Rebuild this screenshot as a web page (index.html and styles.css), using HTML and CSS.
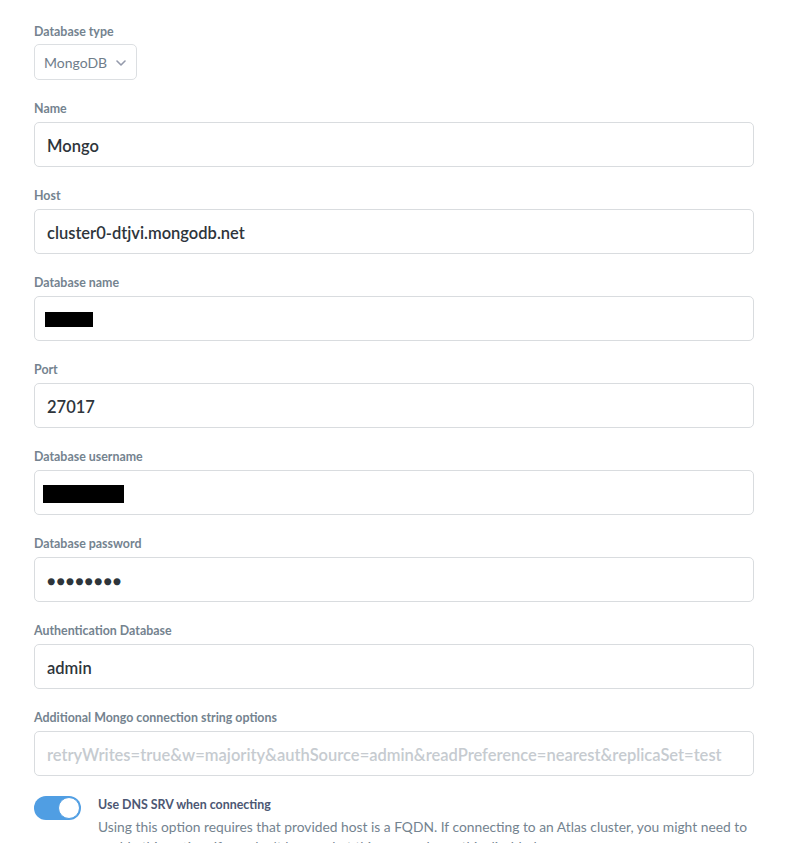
FILE: index.html
```html
<!DOCTYPE html>
<html lang="en">
<head>
  <meta charset="UTF-8" />
  <meta name="viewport" content="width=device-width, initial-scale=1.0" />
  <title>Database connection</title>
  <link rel="stylesheet" href="styles.css">
</head>
<body>
  <form class="db-form">
    <div class="field">
      <label class="field-label field-label-tight">Database type</label>
      <div class="select-btn">
        <span>MongoDB</span>
        <svg class="chevron" width="10" height="6" viewBox="0 0 10 6"><path d="M1 1l4 4 4-4" fill="none" stroke="#949aab" stroke-width="1.6" stroke-linecap="round" stroke-linejoin="round"/></svg>
      </div>
    </div>

    <div class="field">
      <label class="field-label">Name</label>
      <div class="input">Mongo</div>
    </div>

    <div class="field">
      <label class="field-label">Host</label>
      <div class="input">cluster0-dtjvi.mongodb.net</div>
    </div>

    <div class="field">
      <label class="field-label">Database name</label>
      <div class="input"><span class="redacted redacted-sm"></span></div>
    </div>

    <div class="field">
      <label class="field-label">Port</label>
      <div class="input">27017</div>
    </div>

    <div class="field">
      <label class="field-label">Database username</label>
      <div class="input"><span class="redacted redacted-lg"></span></div>
    </div>

    <div class="field">
      <label class="field-label">Database password</label>
      <div class="input dots">&#9679;&#9679;&#9679;&#9679;&#9679;&#9679;&#9679;&#9679;</div>
    </div>

    <div class="field">
      <label class="field-label">Authentication Database</label>
      <div class="input">admin</div>
    </div>

    <div class="field">
      <label class="field-label">Additional Mongo connection string options</label>
      <div class="input placeholder">retryWrites=true&amp;w=majority&amp;authSource=admin&amp;readPreference=nearest&amp;replicaSet=test</div>
    </div>

    <div class="toggle-row">
      <div class="toggle"><span class="knob"></span></div>
      <div class="toggle-text">
        <div class="toggle-title">Use DNS SRV when connecting</div>
        <div class="toggle-desc">Using this option requires that provided host is a FQDN. If connecting to an Atlas cluster, you might need to enable this option. If you don't know what this means, leave this disabled.</div>
      </div>
    </div>
  </form>
</body>
</html>
```

FILE: styles.css
```css
body {
  margin: 0;
  background: #ffffff;
  font-family: Lato, 'Noto Sans', sans-serif;
  color: #2e353b;
}

.db-form {
  width: 720px;
  padding: 23px 0 0 34px;
}

.field {
  margin-bottom: 20px;
}

.field-label {
  display: block;
  padding-top: 1px;
  font-size: 12.4px;
  font-weight: 700;
  line-height: 16px;
  color: #74838f;
  margin-bottom: 5px;
}

.field-label-tight {
  margin-bottom: 4px;
}

.select-btn {
  display: inline-flex;
  align-items: center;
  gap: 9px;
  height: 36px;
  box-sizing: border-box;
  padding: 0 10px 0 9px;
  border: 1px solid #dcdfe2;
  border-radius: 5px;
  font-size: 14px;
  color: #6f7d8a;
}

.chevron {
  margin-top: 1px;
}

.input {
  height: 45px;
  box-sizing: border-box;
  display: flex;
  align-items: center;
  padding: 2px 12px 0;
  border: 1px solid #d9dcdf;
  border-radius: 5px;
  font-size: 16.5px;
  font-weight: 600;
  color: #2e353b;
  white-space: nowrap;
  overflow: hidden;
}

.placeholder {
  color: #c6cbd0;
}

.dots {
  font-size: 14px;
  letter-spacing: 1px;
}

.redacted {
  display: block;
  background: #000;
}

.redacted-sm {
  width: 48px;
  height: 15px;
  margin-left: -2px;
}

.redacted-lg {
  width: 81px;
  height: 18px;
  margin-left: -4px;
}

.toggle-row {
  display: flex;
  gap: 17px;
  margin-top: 1px;
}

.toggle {
  position: relative;
  flex: none;
  width: 47px;
  height: 24px;
  border-radius: 12px;
  background: #509ee3;
}

.knob {
  position: absolute;
  right: 1px;
  top: 1px;
  width: 20px;
  height: 20px;
  border-radius: 50%;
  background: #fff;
  border: 1px solid #509ee3;
}

.toggle-text {
  padding-top: 1px;
}

.toggle-title {
  font-size: 12.4px;
  font-weight: 700;
  line-height: 16px;
  color: #4c5773;
}

.toggle-desc {
  margin-top: 4px;
  font-size: 13.8px;
  line-height: 20px;
  color: #74838f;
}
```
